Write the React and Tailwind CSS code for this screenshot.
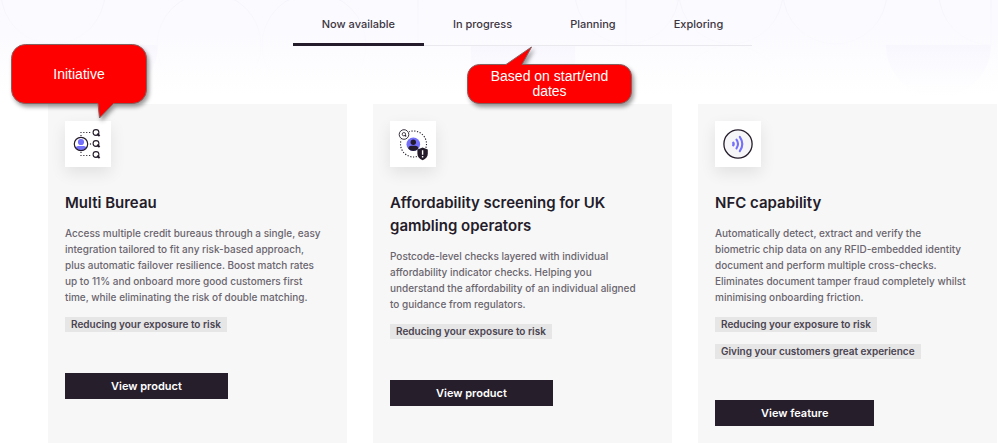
import React from "react";

const INK = "#241c2a";
const VIOLET = "#7470fb";

function Magnifier({ x, y }) {
  return (
    <g stroke={INK} fill="none">
      <circle cx={x} cy={y} r="2.9" strokeWidth="1.1" />
      <path d={`M${x + 1.2} ${y + 1.2}l2.4 2.2`} strokeWidth="2" />
    </g>
  );
}

function BureauIcon() {
  return (
    <svg viewBox="0 0 46 46" className="size-full" aria-hidden="true">
      <path d="M16 15V11.5H27" fill="none" stroke={INK} strokeWidth="1.1" strokeDasharray="1.1 1.8" />
      <path d="M16 31V34.5H27" fill="none" stroke={INK} strokeWidth="1.1" strokeDasharray="1.1 1.8" />
      <circle cx="25.5" cy="23" r="0.7" fill={INK} />
      <clipPath id="bureau-disc"><circle cx="16" cy="23" r="6.2" /></clipPath>
      <circle cx="16" cy="23" r="6.7" fill="#fff" />
      <g clipPath="url(#bureau-disc)" fill={VIOLET}>
        <circle cx="16" cy="21" r="3.1" />
        <rect x="10.5" y="25" width="11" height="8" rx="3" />
      </g>
      <circle cx="16" cy="23" r="6.7" fill="none" stroke={INK} strokeWidth="1.2" />
      <Magnifier x={31} y={11.5} />
      <Magnifier x={31} y={22.5} />
      <Magnifier x={31} y={33.5} />
    </svg>
  );
}

function AffordabilityIcon() {
  return (
    <svg viewBox="0 0 46 46" className="size-full" aria-hidden="true">
      <circle cx="23.5" cy="23" r="13" fill="none" stroke={INK} strokeWidth="1.1" strokeDasharray="1.2 1.6" />
      <circle cx="14" cy="13.5" r="6" fill="#fff" />
      <circle cx="14" cy="13.5" r="4.8" fill="#fff" stroke={INK} strokeWidth="0.9" />
      <circle cx="13.9" cy="13.2" r="1.7" fill="none" stroke={INK} strokeWidth="0.8" />
      <path d="M14.9 14.2l1.3 1.3" stroke={INK} strokeWidth="1.1" />
      <clipPath id="afford-disc"><circle cx="23.3" cy="23.2" r="6.8" /></clipPath>
      <circle cx="23.3" cy="23.2" r="6.8" fill={VIOLET} />
      <g clipPath="url(#afford-disc)" fill={INK}>
        <circle cx="23.3" cy="21.2" r="2.7" />
        <path d="M18.2 30v-1.8q0-3.4 3.4-3.4h3.4q3.4 0 3.4 3.4V30z" />
      </g>
      <path d="M32.6 26.6l5.2 1.9v4.2q0 4-5.2 6.6q-5.2-2.6-5.2-6.6v-4.2z" fill={INK} />
      <path d="M32.6 29.2v4.6M32.6 35.1v1.5" stroke="#fff" strokeWidth="1.4" />
    </svg>
  );
}

function NfcIcon() {
  return (
    <svg viewBox="0 0 46 46" className="size-full" aria-hidden="true">
      <circle cx="23" cy="23" r="14.1" fill="#f6f6f8" stroke={INK} strokeWidth="1.3" />
      <g fill="none" stroke={VIOLET} strokeWidth="2.1" strokeLinecap="round">
        <path d="M18.3 21.8q.6 1.2 0 2.4" strokeWidth="2.5" />
        <path d="M21.5 18.7q3 4.3 0 8.6" />
        <path d="M24.8 15.8q5 7.2 0 14.4" />
      </g>
    </svg>
  );
}

const tabs = ["Now available", "In progress", "Planning", "Exploring"];

const cards = [
  {
    icon: BureauIcon,
    title: ["Multi Bureau"],
    body: [
      "Access multiple credit bureaus through a single, easy",
      "integration tailored to fit any risk-based approach,",
      "plus automatic failover resilience. Boost match rates",
      "up to 11% and onboard more good customers first",
      "time, while eliminating the risk of double matching.",
    ],
    tags: ["Reducing your exposure to risk"],
    action: "View product",
  },
  {
    icon: AffordabilityIcon,
    title: ["Affordability screening for UK", "gambling operators"],
    body: [
      "Postcode-level checks layered with individual",
      "affordability indicator checks. Helping you",
      "understand the affordability of an individual aligned",
      "to guidance from regulators.",
    ],
    tags: ["Reducing your exposure to risk"],
    action: "View product",
  },
  {
    icon: NfcIcon,
    title: ["NFC capability"],
    body: [
      "Automatically detect, extract and verify the",
      "biometric chip data on any RFID-embedded identity",
      "document and perform multiple cross-checks.",
      "Eliminates document tamper fraud completely whilst",
      "minimising onboarding friction.",
    ],
    tags: ["Reducing your exposure to risk", "Giving your customers great experience"],
    action: "View feature",
  },
];

function Lines({ lines }) {
  return lines.map((line, i) => (
    <React.Fragment key={line}>
      {i > 0 && <br />}
      {line}
    </React.Fragment>
  ));
}

function Card({ icon: Icon, title, body, tags, action }) {
  return (
    <article className="flex flex-col items-start bg-[#f7f7f7] px-[17px] pt-[17px] pb-4">
      <div className="size-[46px] bg-white shadow-[0_6px_16px_rgba(0,0,0,0.09)]">
        <Icon />
      </div>
      <h2 className="mt-6 whitespace-nowrap font-[Inter,sans-serif] text-[15px] leading-[23px] font-semibold text-[#241c2a]">
        <Lines lines={title} />
      </h2>
      <p className="mt-[11px] whitespace-nowrap font-[Inter,sans-serif] text-[10px] leading-4 font-medium text-[#6a656e]">
        <Lines lines={body} />
      </p>
      <ul className="mt-3 flex flex-col items-start gap-3">
        {tags.map((tag) => (
          <li key={tag} className="bg-[#e6e6e7] px-[6px] font-[Inter,sans-serif] text-[10px] leading-[15px] font-semibold whitespace-nowrap text-[#4a434f]">
            {tag}
          </li>
        ))}
      </ul>
      <button type="button" className="mt-[41px] h-[26px] bg-[#261e2b] px-[46px] font-[Inter,sans-serif] text-[11px] font-semibold whitespace-nowrap text-white">
        {action}
      </button>
    </article>
  );
}

function Backdrop() {
  return (
    <svg className="absolute top-0 left-0 h-[104px] w-[998px]" viewBox="0 0 998 104" aria-hidden="true">
      <defs>
        <linearGradient id="fill-fade" gradientUnits="userSpaceOnUse" x1="0" y1="45" x2="0" y2="96">
          <stop offset="0" stopColor="#f8f7fe" />
          <stop offset="1" stopColor="#ffffff" />
        </linearGradient>
        <linearGradient id="line-fade" gradientUnits="userSpaceOnUse" x1="0" y1="0" x2="0" y2="90">
          <stop offset="0" stopColor="#f5f4fc" />
          <stop offset="1" stopColor="#ffffff" />
        </linearGradient>
      </defs>
      <path d="M886 45H991A52 52 0 0 1 886 45Z" fill="url(#fill-fade)" />
      <path d="M471 45H575V96H471Z" fill="url(#fill-fade)" />
      <path d="M106 45H158A52 52 0 0 1 106 97Z" fill="url(#fill-fade)" />
      <g fill="none" stroke="url(#line-fade)">
        <circle cx="53" cy="-8" r="52" />
        <circle cx="209" cy="45" r="52" />
        <circle cx="314" cy="45" r="52" />
        <path d="M418 0V45M626 0V45M991 0V45" />
        <circle cx="627" cy="-8" r="52" />
        <circle cx="731" cy="-8" r="52" />
        <circle cx="835" cy="-8" r="52" />
        <circle cx="731" cy="97" r="52" />
        <path d="M939 -8A52 52 0 0 0 991 45" />
      </g>
    </svg>
  );
}

function Bubble({ path, viewBox, className, children, textClass }) {
  return (
    <div className={`absolute ${className}`}>
      <svg viewBox={viewBox} className="absolute inset-0 size-full overflow-visible drop-shadow-[2px_3px_2px_rgba(0,0,0,0.4)]" aria-hidden="true">
        <path d={path} fill="#fe0000" stroke="#84605f" strokeWidth="1" />
      </svg>
      <p className={`relative text-center font-['Liberation_Sans',Arial,sans-serif] text-[14px] text-white ${textClass}`}>{children}</p>
    </div>
  );
}

export default function App() {
  return (
    <main className="relative flex min-h-screen flex-col overflow-hidden bg-white">
      <div className="absolute inset-x-0 top-0 h-[104px] bg-linear-to-b from-[#fafaff] from-20% to-white to-90%" />
      <Backdrop />
      <div className="relative flex flex-1 flex-col pr-px pl-12">
        <nav className="flex justify-center">
          <div role="tablist" className="flex h-[46px] border-b border-[#e9e9ee]">
            {tabs.map((tab, i) => (
              <button
                key={tab}
                type="button"
                role="tab"
                aria-selected={i === 0}
                className={`-mb-px border-b-[3px] px-[29px] pt-[6px] font-[Inter,sans-serif] text-[11px] font-medium text-[#3d3642] ${i === 0 ? "border-[#241c2a]" : "border-transparent"}`}
              >
                {tab}
              </button>
            ))}
          </div>
        </nav>
        <section className="mt-[58px] grid flex-1 grid-cols-3 gap-[26px]">
          {cards.map((card) => (
            <Card key={card.title[0]} {...card} />
          ))}
        </section>
      </div>
      <Bubble
        className="top-[44px] left-[11px] h-[75px] w-[136px]"
        viewBox="0 0 136 75"
        path="M14.5 .5H121.5A14 14 0 0 1 135.5 14.5V45.5A14 14 0 0 1 121.5 59.5H102.5L88.5 74L87 59.5H14.5A14 14 0 0 1 .5 45.5V14.5A14 14 0 0 1 14.5 .5Z"
        textClass="pt-5 leading-5"
      >
        Initiative
      </Bubble>
      <Bubble
        className="top-[47px] left-[467px] h-[57px] w-[165px]"
        viewBox="0 0 165 57"
        path="M12.5 17.5H39L64.5 0L55 17.5H152.5A12 12 0 0 1 164.5 29.5V44.5A12 12 0 0 1 152.5 56.5H12.5A12 12 0 0 1 .5 44.5V29.5A12 12 0 0 1 12.5 17.5Z"
        textClass="pt-[22px] leading-[15px]"
      >
        Based on start/end
        <br />
        dates
      </Bubble>
    </main>
  );
}
